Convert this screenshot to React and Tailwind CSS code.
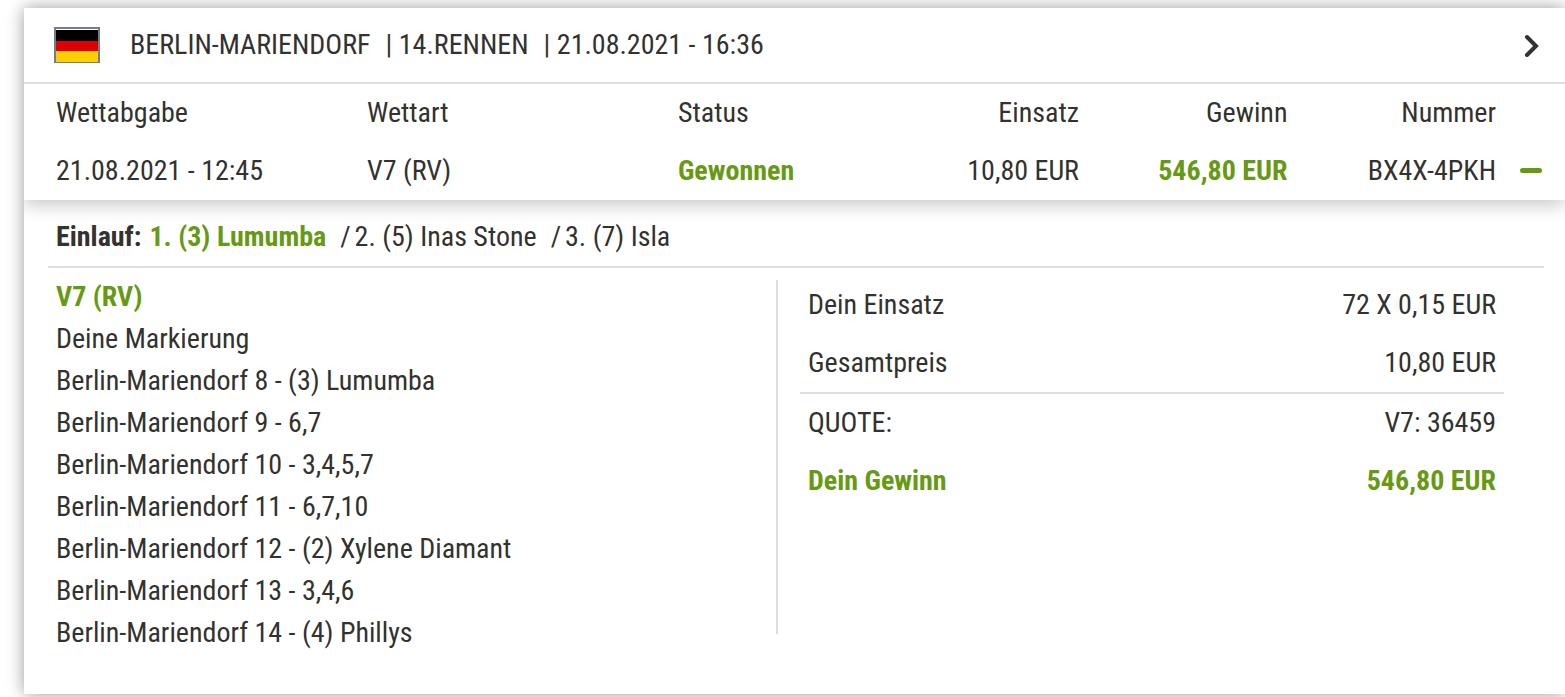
const legs = [
  "Berlin-Mariendorf 8 - (3) Lumumba",
  "Berlin-Mariendorf 9 - 6,7",
  "Berlin-Mariendorf 10 - 3,4,5,7",
  "Berlin-Mariendorf 11 - 6,7,10",
  "Berlin-Mariendorf 12 - (2) Xylene Diamant",
  "Berlin-Mariendorf 13 - 3,4,6",
  "Berlin-Mariendorf 14 - (4) Phillys",
];

function Flag() {
  return (
    <svg className="w-[46px] h-9 shrink-0" viewBox="0 0 46 36" role="img" aria-label="Deutschland">
      <rect width="46" height="36" fill="#747d86" />
      <rect x="2" y="2" width="42" height="1" fill="#fff" />
      <rect x="2" y="3" width="42" height="11" fill="#000" />
      <rect x="2" y="14" width="42" height="10" fill="#d00" />
      <rect x="2" y="24" width="42" height="11" fill="#ffce00" />
    </svg>
  );
}

function RaceHeader() {
  return (
    <header className="flex items-center h-[76px] pl-[30px] pr-[21px] border-b-2 border-[#dedede]">
      <Flag />
      <h1 className="flex flex-1 flex-wrap gap-x-[15px] ml-[30px]">
        <span>BERLIN-MARIENDORF</span>
        <span>| 14.RENNEN</span>
        <span>| 21.08.2021 - 16:36</span>
      </h1>
      <button type="button" aria-label="Rennen anzeigen" className="cursor-pointer">
        <svg
          className="w-6 h-6"
          viewBox="0 0 24 24"
          fill="none"
          stroke="#32322f"
          strokeWidth="4"
          strokeLinecap="round"
        >
          <path d="M7 4 16 13 7 22" />
        </svg>
      </button>
    </header>
  );
}

function BetTable() {
  return (
    <div className="pl-6 shadow-[0_4px_18px_rgba(0,0,0,0.24)] [clip-path:inset(0_0_-24px_0)]">
      <table className="w-full table-fixed text-left">
        <thead>
          <tr className="h-[58px]">
            <th className="w-[20.5%] px-2 font-normal">Wettabgabe</th>
            <th className="w-[20.5%] px-2 font-normal">Wettart</th>
            <th className="px-2 font-normal">Status</th>
            <th className="px-2 font-normal text-right">Einsatz</th>
            <th className="px-2 font-normal text-right">Gewinn</th>
            <th className="px-2 font-normal text-right">Nummer</th>
            <td className="w-[61px]"></td>
          </tr>
        </thead>
        <tbody>
          <tr className="h-[58px]">
            <td className="px-2">21.08.2021 - 12:45</td>
            <td className="px-2">V7 (RV)</td>
            <td className="px-2 font-bold text-[#679a14]">Gewonnen</td>
            <td className="px-2 text-right">10,80 EUR</td>
            <td className="px-2 text-right font-bold text-[#679a14]">546,80 EUR</td>
            <td className="px-2 text-right">BX4X-4PKH</td>
            <td className="pl-4">
              <button
                type="button"
                aria-label="Details ausblenden"
                className="flex items-center w-[22px] h-6 pb-0.5 cursor-pointer"
              >
                <span className="w-full h-[5px] rounded-sm bg-[#679a14]"></span>
              </button>
            </td>
          </tr>
        </tbody>
      </table>
    </div>
  );
}

function SummaryRow({ label, value, className = "" }) {
  return (
    <div className={`flex items-center justify-between h-[58px] px-2 ${className}`}>
      <dt>{label}</dt>
      <dd>{value}</dd>
    </div>
  );
}

function App() {
  return (
    <div className="pl-6 pt-2 bg-white overflow-hidden pb-6 text-[28px] leading-[42px] text-[#32322f] font-['Roboto_Condensed','Liberation_Sans_Narrow',Roboto,sans-serif]">
      <main className="bg-white pb-10 shadow-[0_0_16px_rgba(0,0,0,0.4)]">
        <RaceHeader />
        <BetTable />
        <section className="pl-6">
          <div className="flex flex-wrap mr-[21px] px-2 pt-4 pb-2 border-b-2 border-[#dedede]">
            <strong className="mr-2">Einlauf:</strong>
            <strong className="text-[#679a14]">1. (3) Lumumba</strong>
            <span className="ml-3.5 mr-1">/</span>
            <span>2. (5) Inas Stone</span>
            <span className="ml-3.5 mr-1">/</span>
            <span>3. (7) Isla</span>
          </div>
          <div className="grid grid-cols-2 mr-[61px] pt-2">
            <div className="px-2">
              <h2 className="font-bold text-[#679a14]">V7 (RV)</h2>
              <p>Deine Markierung</p>
              <ul>
                {legs.map((leg) => (
                  <li key={leg}>{leg}</li>
                ))}
              </ul>
            </div>
            <div className="flex">
              <div className="w-0.5 mt-1 mb-5 mr-[22px] bg-[#dedede]"></div>
              <dl className="flex-1">
                <SummaryRow label="Dein Einsatz" value="72 X 0,15 EUR" />
                <SummaryRow label="Gesamtpreis" value="10,80 EUR" />
                <SummaryRow
                  label="QUOTE:"
                  value="V7: 36459"
                  className="box-content border-t-2 border-[#dedede]"
                />
                <SummaryRow
                  label="Dein Gewinn"
                  value="546,80 EUR"
                  className="font-bold text-[#679a14]"
                />
              </dl>
            </div>
          </div>
        </section>
      </main>
    </div>
  );
}

export default App;
